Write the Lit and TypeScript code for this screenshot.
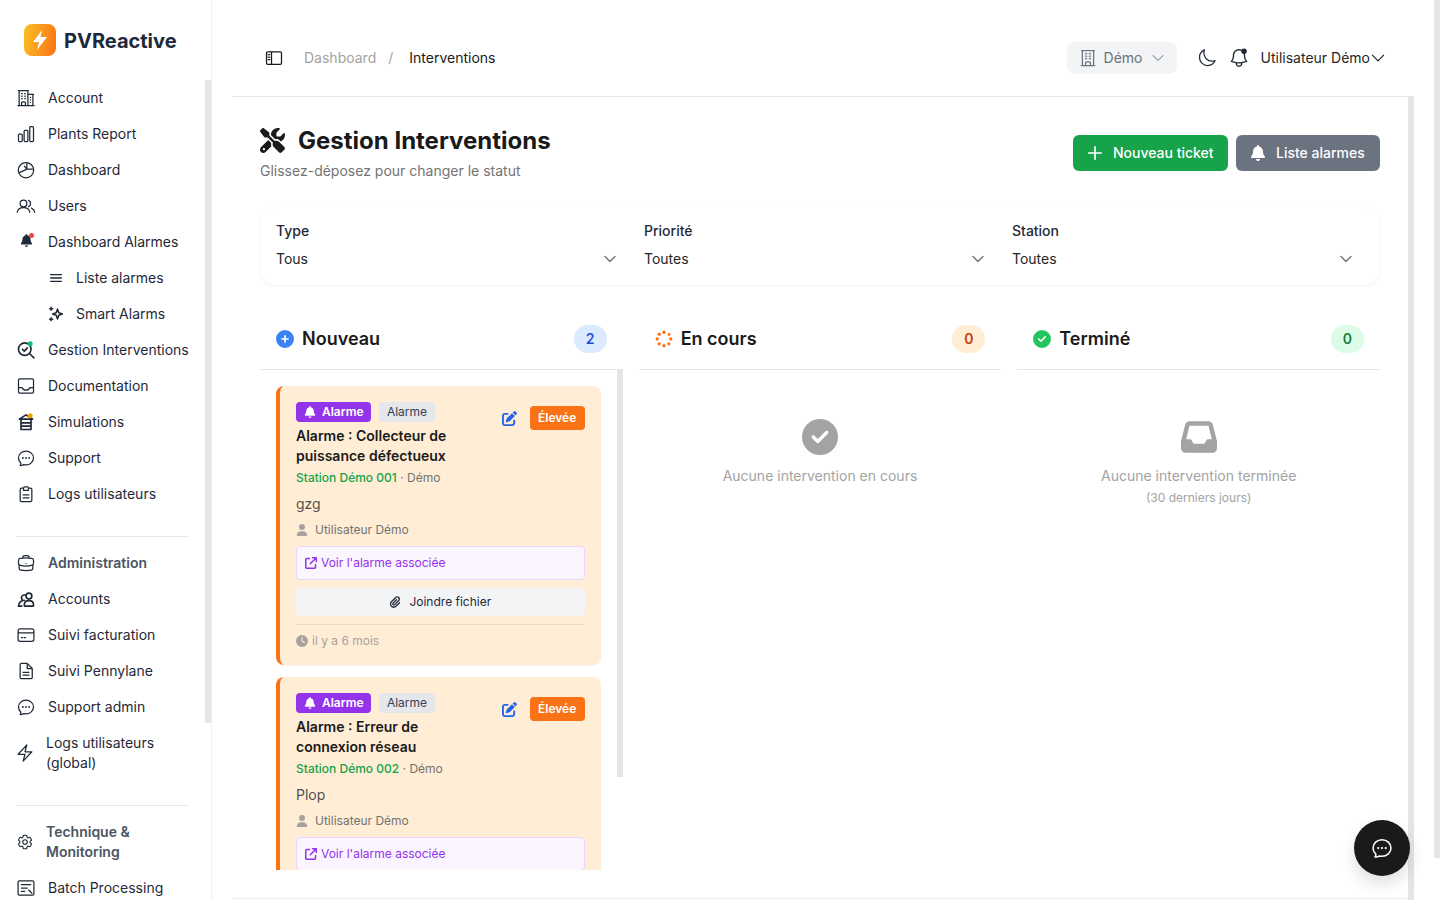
import { LitElement, html, css, svg } from "lit";
import { customElement } from "lit/decorators.js";

const P = {
  building2: "M2.25 21h19.5m-18-18v18m10.5-18v18m6-13.5V21M6.75 6.75h.75m-.75 3h.75m-.75 3h.75m3-6h.75m-.75 3h.75m-.75 3h.75M6.75 21v-3.375c0-.621.504-1.125 1.125-1.125h2.25c.621 0 1.125.504 1.125 1.125V21M3 3h12m-.75 4.5H21m-3.75 3.75h.008v.008h-.008v-.008Zm0 3h.008v.008h-.008v-.008Zm0 3h.008v.008h-.008v-.008Z",
  building: "M3.75 21h16.5M4.5 3h15M5.25 3v18m13.5-18v18M9 6.75h1.5m-1.5 3h1.5m-1.5 3h1.5m3-6H15m-1.5 3H15m-1.5 3H15M9 21v-3.375c0-.621.504-1.125 1.125-1.125h3.75c.621 0 1.125.504 1.125 1.125V21",
  chart: "M3 13.125C3 12.504 3.504 12 4.125 12h2.25c.621 0 1.125.504 1.125 1.125v6.75C7.5 20.496 6.996 21 6.375 21h-2.25A1.125 1.125 0 0 1 3 19.875v-6.75ZM9.75 8.625c0-.621.504-1.125 1.125-1.125h2.25c.621 0 1.125.504 1.125 1.125v11.25c0 .621-.504 1.125-1.125 1.125h-2.25a1.125 1.125 0 0 1-1.125-1.125V8.625ZM16.5 4.125c0-.621.504-1.125 1.125-1.125h2.25C20.496 3 21 3.504 21 4.125v15.75c0 .621-.504 1.125-1.125 1.125h-2.25a1.125 1.125 0 0 1-1.125-1.125V4.125Z",
  pie: "M12 3a9.2 9.2 0 1 0 9.2 9.2A9.2 9.2 0 0 0 12 3ZM13 3.2V11h8M13 11l-3-3.6M13 11l-9.4 4.4",
  users: "M13 9a4 4 0 1 1-8 0 4 4 0 0 1 8 0ZM1.500 19.500c.5-3.500 3.800-5.500 7.500-5.500s7 2 7.500 5.500M15 5.300a4 4 0 0 1 0 7.400M18.500 14.500c2 .8 3.500 2.500 4 5",
  bars: "M4 7h16M4 12h16M4 17h16",
  sparkles: "M14 5.5l1.7 4.8 4.8 1.7-4.8 1.7L14 18.5l-1.7-4.8-4.8-1.7 4.8-1.7L14 5.5ZM5.5 3v4M3.5 5h4M5.5 17v4M3.5 19h4",
  search: "M18 11a7.5 7.5 0 1 1-15 0 7.5 7.5 0 0 1 15 0ZM16.5 16.5 21.5 21.5M7.8 11.2l2.2 2.2 3.6-4",
  inbox: "M4.5 3.5h15A1.5 1.5 0 0 1 21 5v14a1.5 1.5 0 0 1-1.5 1.5h-15A1.5 1.5 0 0 1 3 19V5a1.5 1.5 0 0 1 1.5-1.5ZM3 14h4.5c.8 2 2.4 3 4.5 3s3.7-1 4.5-3H21",
  sim: "M12 3.500 4 8.500h16L12 3.500ZM6 8.500V21h12V8.500M6 13h12M6 17h12",
  chat: "M8.625 12a.375.375 0 1 1-.75 0 .375.375 0 0 1 .75 0Zm0 0H8.25m4.125 0a.375.375 0 1 1-.75 0 .375.375 0 0 1 .75 0Zm0 0H12m4.125 0a.375.375 0 1 1-.75 0 .375.375 0 0 1 .75 0Zm0 0h-.375M21 12c0 4.556-4.03 8.25-9 8.25a9.764 9.764 0 0 1-2.555-.337A5.972 5.972 0 0 1 5.41 20.97a5.969 5.969 0 0 1-.474-.065 4.48 4.48 0 0 0 .978-2.025c.09-.457-.133-.901-.467-1.226C3.93 16.178 3 14.189 3 12c0-4.556 4.03-8.25 9-8.25s9 3.694 9 8.25Z",
  clip: "M9 5H6.5A1.5 1.5 0 0 0 5 6.5v13A1.5 1.5 0 0 0 6.5 21h11a1.5 1.5 0 0 0 1.5-1.5v-13A1.5 1.5 0 0 0 17.500 5H15M9 5a1.500 1.500 0 0 1 1.500-1.500h3A1.500 1.500 0 0 1 15 5v2.500H9V5ZM8.500 13h7M8.500 16.500h7",
  brief: "M20.25 14.15v4.25c0 1.094-.787 2.036-1.872 2.18-2.087.277-4.216.42-6.378.42s-4.291-.143-6.378-.42c-1.085-.144-1.872-1.086-1.872-2.18v-4.25m16.5 0a2.18 2.18 0 0 0 .75-1.661V8.706c0-1.081-.768-2.015-1.837-2.175a48.114 48.114 0 0 0-3.413-.387m4.5 8.006c-.194.165-.42.295-.673.38A23.978 23.978 0 0 1 12 15.75c-2.648 0-5.195-.429-7.577-1.22a2.016 2.016 0 0 1-.673-.38m0 0A2.18 2.18 0 0 1 3 12.489V8.706c0-1.081.768-2.015 1.837-2.175a48.111 48.111 0 0 1 3.413-.387m7.5 0V5.25A2.25 2.25 0 0 0 13.5 3h-3a2.25 2.25 0 0 0-2.25 2.25v.894m7.5 0a48.667 48.667 0 0 0-7.5 0M12 12.75h.008v.008H12v-.008Z",
  accounts: "M19 8.500a3.500 3.500 0 1 1-7 0 3.500 3.500 0 0 1 7 0ZM10 20.500v-1.500c0-2.800 2.100-5 5.500-5s5.500 2.200 5.500 5v1.500H10ZM11 7.500a3.200 3.200 0 0 0-4.500 2.700c0 .9.300 1.700.9 2.300M10 13.500c-4 .2-6.500 2.500-7 7H7",
  card: "M5 4.500h14A2.500 2.500 0 0 1 21.500 7v10a2.500 2.500 0 0 1-2.500 2.500H5A2.500 2.500 0 0 1 2.500 17V7A2.500 2.500 0 0 1 5 4.500ZM2.500 9.500h19M6.500 15h1.500M10 15h1.500",
  doc: "M6.500 2.800h7L19.500 9v10.700a1.500 1.500 0 0 1-1.500 1.500H6.500A1.500 1.500 0 0 1 5 19.700V4.300a1.500 1.500 0 0 1 1.500-1.500ZM13.500 2.800V9h6M8.500 13.500h7M8.500 17h7",
  bolt: "M3.750 13.500l10.500-11.250L12 10.500h8.250L9.750 21.750 12 13.500H3.750z",
  cog: "M9.594 3.940c.090-.542.560-.940 1.110-.940h2.593c.550 0 1.020.398 1.110.940l.213 1.281c.063.374.313.686.645.870.074.040.147.083.220.127.325.196.720.257 1.075.124l1.217-.456a1.125 1.125 0 0 1 1.370.490l1.296 2.247a1.125 1.125 0 0 1-.260 1.431l-1.003.827c-.293.241-.438.613-.430.992a7.723 7.723 0 0 1 0 .255c-.008.378.137.750.430.991l1.004.827c.424.350.534.955.260 1.430l-1.298 2.247a1.125 1.125 0 0 1-1.369.491l-1.217-.456c-.355-.133-.750-.072-1.076.124a6.470 6.470 0 0 1-.220.128c-.331.183-.581.495-.644.869l-.213 1.281c-.090.543-.560.940-1.110.940h-2.594c-.550 0-1.019-.398-1.110-.940l-.213-1.281c-.062-.374-.312-.686-.644-.870a6.520 6.520 0 0 1-.220-.127c-.325-.196-.720-.257-1.076-.124l-1.217.456a1.125 1.125 0 0 1-1.369-.490l-1.297-2.247a1.125 1.125 0 0 1 .260-1.431l1.004-.827c.292-.240.437-.613.430-.991a6.932 6.932 0 0 1 0-.255c.007-.380-.138-.751-.430-.992l-1.004-.827a1.125 1.125 0 0 1-.260-1.430l1.297-2.247a1.125 1.125 0 0 1 1.370-.491l1.216.456c.356.133.751.072 1.076-.124.072-.044.146-.086.220-.128.332-.183.582-.495.644-.869l.214-1.280ZM15 12a3 3 0 1 1-6 0 3 3 0 0 1 6 0Z",
  batch: "M4 3.500h16A1.500 1.500 0 0 1 21.500 5v14a1.500 1.500 0 0 1-1.500 1.500H4A1.500 1.500 0 0 1 2.500 19V5A1.500 1.500 0 0 1 4 3.500ZM6.500 8h11M6.500 12h7M6.500 16h4M15 14.500l4 3.500",
  moon: "M21.752 15.002A9.720 9.720 0 0 1 18 15.750c-5.385 0-9.750-4.365-9.750-9.750 0-1.330.266-2.597.748-3.752A9.753 9.753 0 0 0 3 11.250C3 16.635 7.365 21 12.750 21a9.753 9.753 0 0 0 9.002-5.998Z",
  bell: "M14.857 17.082a23.848 23.848 0 0 0 5.454-1.310A8.967 8.967 0 0 1 18 9.750V9A6 6 0 0 0 6 9v.750a8.967 8.967 0 0 1-2.312 6.022c1.733.640 3.560 1.085 5.455 1.310m5.714 0a24.255 24.255 0 0 1-5.714 0m5.714 0a3 3 0 1 1-5.714 0",
  chevron: "m19.500 8.250-7.500 7.500-7.500-7.500",
  panel: "M4.500 4.500h15A1.500 1.500 0 0 1 21 6v12a1.500 1.500 0 0 1-1.500 1.500h-15A1.500 1.500 0 0 1 3 18V6a1.500 1.500 0 0 1 1.500-1.500ZM9 4.500v15M5 8h1.800M5 11h1.800M5 14h1.800",
  plus: "M12 4.500v15m7.500-7.500h-15",
};

const F = {
  bell: "M224 0c-17.700 0-32 14.300-32 32V51.200C119 66 64 130.600 64 208v18.800c0 47-17.300 92.400-48.500 127.600l-7.400 8.300c-8.400 9.400-10.400 22.900-5.300 34.400S19.400 416 32 416H416c12.600 0 24-7.400 29.200-18.900s3.100-25-5.300-34.400l-7.400-8.300C401.300 319.200 384 273.900 384 226.800V208c0-77.400-55-142-128-156.800V32c0-17.700-14.300-32-32-32zm45.300 493.300c12-12 18.700-28.300 18.700-45.300H224 160c0 17 6.700 33.300 18.700 45.300s28.300 18.700 45.300 18.700s33.300-6.700 45.300-18.700z",
  tools: "M78.600 5C69.100-2.400 55.600-1.500 47 7L7 47c-8.500 8.500-9.400 22-2.100 31.600l80 104c4.500 5.900 11.600 9.400 19 9.400h54.100l109 109c-14.700 29-10 65.400 14.300 89.600l112 112c12.500 12.500 32.800 12.500 45.300 0l64-64c12.500-12.500 12.500-32.800 0-45.300l-112-112c-24.200-24.200-60.600-29-89.600-14.300l-109-109V104c0-7.500-3.500-14.500-9.400-19L78.600 5zM19.900 396.100C7.200 408.800 0 426.100 0 444.100C0 481.600 30.400 512 67.900 512c18 0 35.300-7.200 48-19.900L233.700 374.300c-7.800-20.900-9-43.600-3.600-65.100l-61.700-61.700L19.900 396.100zM512 144c0-10.500-1.100-20.700-3.200-30.500c-2.400-11.200-16.100-14.100-24.200-6l-63.900 63.900c-3 3-7.100 4.700-11.300 4.700H352c-8.800 0-16-7.200-16-16V102.600c0-4.200 1.700-8.300 4.700-11.300l63.900-63.900c8.100-8.100 5.200-21.800-6-24.200C388.700 1.100 378.500 0 368 0C288.500 0 224 64.500 224 144l0 .8 85.300 85.300c36-9.100 75.800 .5 104 28.700L429 274.500c49-23 83-72.800 83-130.500zM56 432a24 24 0 1 1 48 0 24 24 0 1 1 -48 0z",
  edit: "M471.600 21.700c-21.900-21.900-57.300-21.900-79.200 0L362.300 51.700l97.900 97.900 30.100-30.100c21.900-21.900 21.900-57.300 0-79.200L471.600 21.700zm-299.200 220c-6.100 6.100-10.800 13.600-13.500 21.900l-29.600 88.800c-2.900 8.600-.6 18.100 5.800 24.600s15.900 8.700 24.600 5.800l88.800-29.600c8.200-2.700 15.700-7.400 21.900-13.500L437.700 172.300 339.700 74.300 172.400 241.700zM96 64C43 64 0 107 0 160V416c0 53 43 96 96 96H352c53 0 96-43 96-96V320c0-17.700-14.300-32-32-32s-32 14.300-32 32v96c0 17.700-14.300 32-32 32H96c-17.700 0-32-14.300-32-32V160c0-17.700 14.300-32 32-32h96c17.700 0 32-14.300 32-32s-14.300-32-32-32H96z",
  ext: "M320 0c-17.700 0-32 14.300-32 32s14.300 32 32 32h82.700L201.400 265.400c-12.500 12.500-12.500 32.800 0 45.300s32.800 12.500 45.300 0L448 109.300V192c0 17.700 14.300 32 32 32s32-14.300 32-32V32c0-17.700-14.300-32-32-32H320zM80 32C35.800 32 0 67.800 0 112V432c0 44.200 35.800 80 80 80H400c44.200 0 80-35.800 80-80V320c0-17.700-14.300-32-32-32s-32 14.300-32 32V432c0 8.800-7.200 16-16 16H80c-8.800 0-16-7.200-16-16V112c0-8.800 7.200-16 16-16H192c17.700 0 32-14.300 32-32s-14.300-32-32-32H80z",
  user: "M224 256A128 128 0 1 0 224 0a128 128 0 1 0 0 256zm-45.700 48C79.800 304 0 383.800 0 482.300C0 498.700 13.300 512 29.700 512H418.300c16.400 0 29.700-13.300 29.700-29.700C448 383.800 368.200 304 269.700 304H178.300z",
  clock: "M256 0a256 256 0 1 1 0 512A256 256 0 1 1 256 0zM232 120V256c0 8 4 15.500 10.700 20l96 64c11 7.400 25.900 4.400 33.300-6.700s4.400-25.900-6.700-33.300L280 243.200V120c0-13.300-10.700-24-24-24s-24 10.700-24 24z",
  paperclip: "M364.200 83.800c-24.400-24.400-64-24.400-88.400 0l-184 184c-42.100 42.100-42.100 110.300 0 152.400s110.300 42.100 152.400 0l152-152c10.900-10.900 28.700-10.900 39.600 0s10.900 28.700 0 39.600l-152 152c-64 64-167.600 64-231.600 0s-64-167.600 0-231.600l184-184c46.300-46.300 121.300-46.300 167.600 0s46.300 121.300 0 167.600l-176 176c-28.600 28.600-75 28.600-103.600 0s-28.600-75 0-103.600l144-144c10.900-10.900 28.700-10.900 39.600 0s10.900 28.700 0 39.600l-144 144c-6.700 6.700-6.700 17.700 0 24.400s17.700 6.700 24.400 0l176-176c24.400-24.400 24.400-64 0-88.400z",
  check: "M256 512A256 256 0 1 0 256 0a256 256 0 1 0 0 512zM369 209L241 337c-9.400 9.400-24.600 9.400-33.900 0l-64-64c-9.400-9.400-9.400-24.600 0-33.900s24.600-9.400 33.900 0l47 47L335 175c9.400-9.400 24.600-9.400 33.900 0s9.400 24.600 0 33.900z",
  plus: "M256 512A256 256 0 1 0 256 0a256 256 0 1 0 0 512zM232 344V280H168c-13.300 0-24-10.700-24-24s10.700-24 24-24h64V168c0-13.300 10.700-24 24-24s24 10.700 24 24v64h64c13.300 0 24 10.700 24 24s-10.700 24-24 24H280v64c0 13.300-10.700 24-24 24s-24-10.700-24-24z",
  inbox: "M121 32C91.600 32 66 52 58.900 80.500L1.900 308.400C.6 313.500 0 318.700 0 323.900V416c0 35.300 28.700 64 64 64H448c35.300 0 64-28.700 64-64V323.900c0-5.200-.6-10.400-1.900-15.500l-57-227.900C446 52 420.400 32 391 32H121zm0 64H391l48 192H387.800c-12.100 0-23.200 6.800-28.600 17.700l-14.300 28.600c-5.400 10.800-16.500 17.700-28.600 17.700H195.800c-12.100 0-23.200-6.800-28.600-17.700l-14.300-28.600c-5.400-10.800-16.500-17.700-28.600-17.700H73L121 96z",
};

const out = (d: string, cls: string, extra: unknown = "") => html`<svg class="ic ${cls}" viewBox="0 0 24 24" fill="none" stroke="currentColor" stroke-width="1.500" stroke-linecap="round" stroke-linejoin="round"><path d=${d}></path>${extra}</svg>`;
const solid = (d: string, cls: string, w = 512) => html`<svg class="ic ${cls}" viewBox="0 0 ${w} 512" fill="currentColor"><path d=${d}></path></svg>`;

const dot = (cx: number, cy: number, r: number, c: string) => svg`<circle cx=${cx} cy=${cy} r=${r} fill=${c} stroke="none"></circle>`;

const spinner = html`<svg class="ic s18 orange" viewBox="0 0 24 24" fill="#f97316">
  <circle cx="12" cy="3" r="2.200"></circle><circle cx="18.800" cy="6" r="1.900"></circle><circle cx="21" cy="12" r="2.200"></circle><circle cx="18.400" cy="18.400" r="2.200"></circle><circle cx="12" cy="21" r="2.200"></circle><circle cx="5.600" cy="18.400" r="2.200"></circle><circle cx="3" cy="12" r="2.200"></circle><circle cx="5.600" cy="5.600" r="2.200"></circle>
</svg>`;

type Item = { t: string; i: unknown; sub?: boolean; strong?: boolean; wrap?: boolean };

const navA: Item[] = [
  { t: "Account", i: out(P.building2, "s20") },
  { t: "Plants Report", i: out(P.chart, "s20") },
  { t: "Dashboard", i: out(P.pie, "s20") },
  { t: "Users", i: out(P.users, "s20") },
  { t: "Dashboard Alarmes", i: html`<span class="bellbox">${solid(F.bell, "s13", 448)}<span class="reddot"></span></span>` },
  { t: "Liste alarmes", i: out(P.bars, "s16 heavy"), sub: true },
  { t: "Smart Alarms", i: out(P.sparkles, "s18 heavy"), sub: true },
  { t: "Gestion Interventions", i: out(P.search, "s20 heavy", dot(17, 4.500, 3, "#10b981")) },
  { t: "Documentation", i: out(P.inbox, "s20") },
  { t: "Simulations", i: out(P.sim, "s20 heavy", dot(17, 4.500, 3, "#f59e0b")) },
  { t: "Support", i: out(P.chat, "s20") },
  { t: "Logs utilisateurs", i: out(P.clip, "s20") },
];
const navB: Item[] = [
  { t: "Administration", i: out(P.brief, "s20"), strong: true },
  { t: "Accounts", i: out(P.accounts, "s20 heavy") },
  { t: "Suivi facturation", i: out(P.card, "s20") },
  { t: "Suivi Pennylane", i: out(P.doc, "s20") },
  { t: "Support admin", i: out(P.chat, "s20") },
  { t: "Logs utilisateurs (global)", i: out(P.bolt, "s20"), wrap: true },
];
const navC: Item[] = [
  { t: "Technique & Monitoring", i: out(P.cog, "s18"), strong: true, wrap: true },
  { t: "Batch Processing", i: out(P.batch, "s20") },
];

const cards = [
  { title: "Alarme : Collecteur de puissance défectueux", st: "Station Démo 001", note: "gzg" },
  { title: "Alarme : Erreur de connexion réseau", st: "Station Démo 002", note: "Plop" },
];

@customElement("app-root")
export class AppRoot extends LitElement {
  static styles = css`
    :host { display: block; position: relative; width: 1440px; height: 900px; overflow: hidden; background: #fff; font-family: Inter, "Liberation Sans", sans-serif; font-size: 14px; line-height: 20px; color: #1a1a1a; }
    * { box-sizing: border-box; }
    .ic { display: block; flex: none; }
    .heavy { stroke-width: 2; }
    .s12 { width: 12px; height: 12px; } .s13 { width: 13px; height: 13px; } .s14 { width: 14px; height: 14px; } .s16 { width: 16px; height: 16px; } .s18 { width: 18px; height: 18px; } .s20 { width: 20px; height: 20px; } .s22 { width: 22px; height: 22px; } .s24 { width: 24px; height: 24px; } .s25 { width: 25px; height: 25px; } .s36 { width: 36px; height: 36px; }
    .layout { display: flex; height: 900px; }
    .side { width: 212px; flex: none; border-right: 1px solid #f0f0f0; height: 900px; overflow: hidden; }
    .logo { display: flex; align-items: center; gap: 8px; padding: 24px 0 24px 24px; height: 80px; }
    .logomark { width: 32px; height: 32px; border-radius: 8px; background: linear-gradient(100deg, #fbbf24, #f97316); color: #fff; display: flex; align-items: center; justify-content: center; }
    .logotext { font-size: 20px; line-height: 32px; font-weight: 700; color: #1e293b; padding-top: 1px; height: 32px; }
    nav { padding: 0 22px 0 16px; width: 211px; }
    .it { display: flex; align-items: center; min-height: 36px; padding: 8px 2px; gap: 14px; color: #1f2937; white-space: nowrap; }
    .it .ib { width: 16px; display: flex; justify-content: center; flex: none; }
    .it.sub { padding-left: 32px; gap: 12px; }
    .it.strong .lbl { font-weight: 600; color: #4b5563; }
    .it.wrap { white-space: normal; }
    .it.wrap .ib { width: 14px; }
    .lbl { min-width: 0; }
    .sep { height: 1px; background: #e5e7eb; margin: 24px 0 8px; width: 173px; }
    .bellbox { position: relative; display: block; width: 12px; height: 13px; color: #1f2937; margin-top: -4px; }
    .reddot { position: absolute; left: 9px; top: -1px; width: 5px; height: 5px; border-radius: 50%; background: #ef4444; }
    .main { margin-left: 20px; width: 1182px; height: 900px; display: flex; flex-direction: column; }
    .top { height: 97px; flex: none; border-bottom: 1px solid #e5e5e5; padding: 20px 27px 0 32px; display: flex; align-items: center; }
    .crumb { margin-left: 20px; color: #a3a3a3; }
    .slash { margin: 0 16px 0 12px; color: #a3a3a3; }
    .cur { color: #1a1a1a; }
    .tright { margin-left: auto; display: flex; align-items: center; }
    .demo { width: 110px; height: 32px; border-radius: 8px; background: #f3f4f6; color: #6b7280; display: flex; align-items: center; padding: 0 11px; gap: 6px; margin-right: 20px; }
    .demo .ch { margin-left: auto; }
    .moon { margin-right: 11px; color: #1f2937; }
    .bl { margin-right: 11px; color: #1f2937; }
    .uname { color: #262626; margin-right: -1px; }
    .body { flex: 1; min-height: 0; padding: 27px 34px 0 28px; overflow: hidden; }
    .tt { display: flex; align-items: center; justify-content: space-between; }
    .ttl { display: flex; align-items: center; gap: 13px; }
    h1 { margin: 0; height: 32px; padding-top: 1px; font-size: 24px; line-height: 32px; font-weight: 700; color: #1a1a1a; white-space: nowrap; }
    .subt { margin-top: 5px; color: #737373; }
    .btns { display: flex; gap: 8px; }
    .btn { height: 36px; border-radius: 6px; display: flex; align-items: center; color: #fff; font-weight: 500; white-space: nowrap; }
    .btn.g { background: #16a34a; width: 155px; padding-left: 12px; gap: 8px; }
    .btn.g .ic { stroke-width: 2; }
    .btn.s { background: #6b7280; width: 144px; padding-left: 14px; gap: 10px; }
    .filters { margin-top: 27px; height: 77px; border-radius: 16px; padding: 13px 16px 12px; display: grid; grid-template-columns: repeat(3, 1fr); gap: 16px; box-shadow: 0 1px 3px rgba(0,0,0,.06); }
    .flabel { height: 20px; font-weight: 500; color: #1f2937; }
    .fsel { margin-top: 4px; height: 28px; display: flex; align-items: center; justify-content: space-between; padding-right: 10px; color: #262626; }
    .fsel .ic { color: #6b7280; stroke-width: 2; }
    .cols { margin-top: 24px; display: grid; grid-template-columns: repeat(3, 1fr); gap: 16px; }
    .colhead { height: 61px; border-bottom: 1px solid #e5e5e5; padding: 0 16px; display: flex; align-items: center; gap: 8px; }
    .colhead h2 { margin: 0; font-size: 18px; line-height: 28px; font-weight: 600; color: #1a1a1a; }
    .cnt { margin-left: auto; width: 33px; height: 28px; border-radius: 14px; display: flex; align-items: center; justify-content: center; font-weight: 600; }
    .cnt.b { background: #dbeafe; color: #1d4ed8; } .cnt.o { background: #ffedd5; color: #c2410c; } .cnt.g { background: #dcfce7; color: #15803d; }
    .blue { color: #3b82f6; } .green { color: #22c55e; }
    .list { height: 500px; overflow: hidden; padding: 16px 22px 0 16px; display: flex; flex-direction: column; gap: 12px; }
    .card { flex: none; background: #ffedd5; border-left: 4px solid #f97316; border-radius: 8px; padding: 16px; box-shadow: 0 1px 2px rgba(0,0,0,.04); }
    .chead { display: flex; justify-content: space-between; }
    .cleft { width: 194px; }
    .tags { display: flex; gap: 8px; }
    .tag { height: 20px; border-radius: 4px; font-size: 12px; line-height: 20px; padding: 0 8px; display: flex; align-items: center; }
    .tag.p { background: #9333ea; color: #fff; font-weight: 600; gap: 6px; padding-right: 7px; width: 75px; }
    .tag.n { background: #e5e7eb; color: #374151; width: 56px; justify-content: center; padding: 0; }
    .ctitle { margin-top: 4px; font-weight: 600; color: #1a1a1a; }
    .cright { display: flex; align-items: flex-start; gap: 13px; padding-top: 4px; }
    .edit { margin-top: 5px; color: #2563eb; width: 15px; height: 15px; }
    .prio { height: 24px; width: 55px; border-radius: 4px; background: #f97316; color: #fff; font-size: 12px; font-weight: 600; display: flex; align-items: center; justify-content: center; }
    .st { margin-top: 4px; font-size: 12px; line-height: 16px; color: #737373; }
    .st b { color: #16a34a; font-weight: 500; }
    .note { margin-top: 8px; color: #525252; }
    .usr { margin-top: 8px; font-size: 12px; line-height: 16px; display: flex; align-items: center; gap: 7px; color: #737373; }
    .usr .ic { color: #a8a29e; }
    .link { margin-top: 8px; height: 34px; border: 1px solid #e9d5ff; background: #faf5ff; border-radius: 4px; color: #9333ea; font-size: 12px; padding: 0 8px; display: flex; align-items: center; gap: 4px; }
    .join { margin-top: 8px; height: 28px; background: #f3f4f6; border-radius: 4px; font-size: 12px; color: #1f2937; display: flex; align-items: center; justify-content: center; gap: 8px; }
    .time { margin-top: 8px; border-top: 1px solid #e7dccd; padding-top: 8px; font-size: 12px; line-height: 16px; color: #a8a29e; display: flex; align-items: center; gap: 4px; }
    .empty { display: flex; flex-direction: column; align-items: center; padding-top: 49px; color: #a3a3a3; }
    .empty .msg { margin-top: 11px; }
    .empty .small { margin-top: 4px; font-size: 12px; line-height: 16px; }
    .foot { height: 2px; flex: none; border-top: 1px solid #eeeeee; }
    .thumb { position: absolute; width: 6px; background: #e5e5e5; }
    .t-side { left: 205px; top: 80px; height: 643px; }
    .t-main { left: 1408px; top: 97px; height: 803px; }
    .t-page { left: 1434px; top: 0; height: 858px; }
    .t-list { left: 617px; top: 370px; height: 407px; }
    .fab { position: absolute; left: 1354px; top: 820px; width: 56px; height: 56px; border-radius: 50%; background: #1a1a1a; color: #fff; display: flex; align-items: center; justify-content: center; box-shadow: 0 8px 16px rgba(0,0,0,.12); }
  `;

  private navItem(n: Item) {
    return html`<div class="it ${n.sub ? "sub" : ""} ${n.strong ? "strong" : ""} ${n.wrap ? "wrap" : ""}"><span class="ib">${n.i}</span><span class="lbl">${n.t}</span></div>`;
  }

  private card(c: (typeof cards)[number]) {
    return html`<div class="card">
      <div class="chead">
        <div class="cleft">
          <div class="tags"><span class="tag p">${solid(F.bell, "s12", 448)}Alarme</span><span class="tag n">Alarme</span></div>
          <div class="ctitle">${c.title}</div>
        </div>
        <div class="cright">${solid(F.edit, "edit")}<span class="prio">Élevée</span></div>
      </div>
      <div class="st"><b>${c.st}</b> · Démo</div>
      <div class="note">${c.note}</div>
      <div class="usr">${solid(F.user, "s12", 448)}Utilisateur Démo</div>
      <div class="link">${solid(F.ext, "s12")}Voir l'alarme associée</div>
      <div class="join">${solid(F.paperclip, "s12", 448)}Joindre fichier</div>
      <div class="time">${solid(F.clock, "s12")}il y a 6 mois</div>
    </div>`;
  }

  render() {
    return html`
      <div class="layout">
        <aside class="side">
          <div class="logo">
            <span class="logomark"><svg class="ic s24" viewBox="0 0 24 24" fill="#fff"><path d="M14 2 5 14h6l-2 8 10-13h-6.500z"></path></svg></span>
            <span class="logotext">PVReactive</span>
          </div>
          <nav>
            ${navA.map((n) => this.navItem(n))}
            <div class="sep"></div>
            ${navB.map((n) => this.navItem(n))}
            <div class="sep"></div>
            ${navC.map((n) => this.navItem(n))}
          </nav>
        </aside>
        <main class="main">
          <header class="top">
            ${out(P.panel, "s20")}
            <span class="crumb">Dashboard</span><span class="slash">/</span><span class="cur">Interventions</span>
            <div class="tright">
              <div class="demo">${out(P.building, "s20")}<span>Démo</span>${out(P.chevron, "s16 ch")}</div>
              ${out(P.moon, "s20 moon")}
              ${out(P.bell, "s22 bl", dot(17.500, 4.500, 3, "#1f2937"))}
              <span class="uname">Utilisateur Démo</span>${out(P.chevron, "s18")}
            </div>
          </header>
          <section class="body">
            <div class="tt">
              <div>
                <div class="ttl">${solid(F.tools, "s25")}<h1>Gestion Interventions</h1></div>
                <div class="subt">Glissez-déposez pour changer le statut</div>
              </div>
              <div class="btns">
                <div class="btn g">${out(P.plus, "s20")}<span>Nouveau ticket</span></div>
                <div class="btn s">${solid(F.bell, "s16", 448)}<span>Liste alarmes</span></div>
              </div>
            </div>
            <div class="filters">
              ${[["Type", "Tous"], ["Priorité", "Toutes"], ["Station", "Toutes"]].map(([a, b]) => html`<div><div class="flabel">${a}</div><div class="fsel"><span>${b}</span>${out(P.chevron, "s16")}</div></div>`)}
            </div>
            <div class="cols">
              <div>
                <div class="colhead">${solid(F.plus, "s18 blue")}<h2>Nouveau</h2><span class="cnt b">2</span></div>
                <div class="list">${cards.map((c) => this.card(c))}</div>
              </div>
              <div>
                <div class="colhead">${spinner}<h2>En cours</h2><span class="cnt o">0</span></div>
                <div class="empty">${solid(F.check, "s36")}<div class="msg">Aucune intervention en cours</div></div>
              </div>
              <div>
                <div class="colhead">${solid(F.check, "s18 green")}<h2>Terminé</h2><span class="cnt g">0</span></div>
                <div class="empty">${solid(F.inbox, "s36")}<div class="msg">Aucune intervention terminée</div><div class="small">(30 derniers jours)</div></div>
              </div>
            </div>
          </section>
          <div class="foot"></div>
        </main>
      </div>
      <div class="thumb t-side"></div>
      <div class="thumb t-main"></div>
      <div class="thumb t-page"></div>
      <div class="thumb t-list"></div>
      <div class="fab">${out(P.chat, "s24")}</div>
    `;
  }
}
